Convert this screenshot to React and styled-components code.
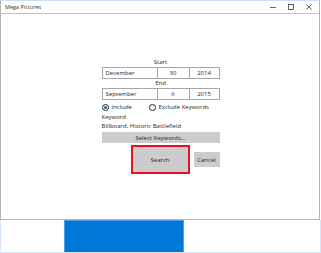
import React from 'react';
import styled, { createGlobalStyle } from 'styled-components';

const Global = createGlobalStyle`
  html, body {
    margin: 0;
    padding: 0;
    background: #fff;
  }
  body {
    font-family: "Open Sans", "Noto Sans", sans-serif;
    color: #1e1e1e;
  }
`

const Page = styled.div`
  width: 321px;
  height: 253px;
  display: flex;
  flex-direction: column;
  overflow: hidden;
`

const Window = styled.div`
  width: 320px;
  height: 220px;
  box-sizing: border-box;
  border: 1px solid #b4b4b4;
  border-top: 1px solid #cfdff3;
  display: flex;
  flex-direction: column;
  background: #fff;
`

const TitleBar = styled.div`
  height: 12px;
  display: flex;
  align-items: center;
  padding-left: 4px;
  padding-right: 1px;
  border-bottom: 1px solid #c4c4c4;
  font-size: 5.5px;
  color: #333;
`

const Title = styled.span`
  flex: 1;
`

const Controls = styled.div`
  display: flex;
  height: 100%;
`

const Ctl = styled.div`
  width: 18px;
  display: flex;
  align-items: center;
  justify-content: center;
`

const Content = styled.div`
  flex: 1;
  display: flex;
  justify-content: center;
  padding-top: 44px;
`

const Form = styled.div`
  width: 118px;
  margin-left: 1px;
  display: flex;
  flex-direction: column;
  font-size: 6px;
`

const Label = styled.div`
  height: ${p => p.$h || 8}px;
  line-height: 8px;
  text-align: ${p => (p.$center ? 'center' : 'left')};
  white-space: nowrap;
`

const DateRow = styled.div`
  display: grid;
  grid-template-columns: 54px 32px 1fr;
  box-sizing: border-box;
  height: 12px;
  margin-top: 1px;
  border: 1px solid #a6a6a6;
`

const Cell = styled.div`
  display: flex;
  align-items: center;
  justify-content: ${p => (p.$left ? 'flex-start' : 'center')};
  padding-left: ${p => (p.$left ? 3 : 0)}px;
  border-left: ${p => (p.$left ? 'none' : '1px solid #a6a6a6')};
`

const RadioRow = styled.div`
  display: flex;
  align-items: center;
  height: 10px;
  margin-top: 2px;
  margin-bottom: 1px;
`

const Radio = styled.label`
  display: flex;
  align-items: center;
  gap: 3px;
  width: ${p => p.$w || 'auto'};
`

const Circle = styled.span`
  width: 7px;
  height: 7px;
  box-sizing: border-box;
  border-radius: 50%;
  border: 1px solid #222;
  display: flex;
  align-items: center;
  justify-content: center;
  &::after {
    content: '';
    width: 3px;
    height: 3px;
    border-radius: 50%;
    background: ${p => (p.$on ? '#0063b1' : 'transparent')};
  }
`

const WideButton = styled.div`
  height: 11px;
  background: #cccccc;
  display: flex;
  align-items: center;
  justify-content: center;
  margin-top: 2px;
`

const ButtonRow = styled.div`
  display: flex;
  justify-content: flex-end;
  align-items: center;
  gap: 4px;
  margin-top: 2px;
`

const Button = styled.div`
  box-sizing: border-box;
  width: ${p => p.$w}px;
  height: ${p => p.$h}px;
  background: #cccccc;
  border: ${p => (p.$focus ? '2px solid #e81123' : 'none')};
  display: flex;
  align-items: center;
  justify-content: center;
`

const Lower = styled.div`
  flex: 1;
  width: 321px;
  box-sizing: border-box;
  border: 1px solid #d6e5f7;
  border-top: none;
  display: flex;
  padding-left: 63px;
`

const Tile = styled.div`
  width: 120px;
  background: #0078d7;
  border: 1px solid #4f9fe6;
  border-bottom: none;
  box-sizing: border-box;
`

const Minimize = () => (
  <svg width="6" height="6" viewBox="0 0 6 6">
    <path d="M0 3.5h6" stroke="#222" strokeWidth="0.7" />
  </svg>
)

const Maximize = () => (
  <svg width="6" height="6" viewBox="0 0 6 6">
    <rect x="0.5" y="0.5" width="5" height="5" fill="none" stroke="#222" strokeWidth="0.7" />
  </svg>
)

const Close = () => (
  <svg width="6" height="6" viewBox="0 0 6 6">
    <path d="M0.3 0.3L5.7 5.7M5.7 0.3L0.3 5.7" stroke="#222" strokeWidth="0.7" />
  </svg>
)

const dates = [
  { label: 'Start', month: 'December', day: '30', year: '2014' },
  { label: 'End', month: 'September', day: '6', year: '2015' },
]

export default function App() {
  return (
    <Page>
      <Global />
      <Window>
        <TitleBar>
          <Title>Mega Pictures</Title>
          <Controls>
            <Ctl><Minimize /></Ctl>
            <Ctl><Maximize /></Ctl>
            <Ctl><Close /></Ctl>
          </Controls>
        </TitleBar>
        <Content>
          <Form>
            {dates.map(d => (
              <React.Fragment key={d.label}>
                <Label $center>{d.label}</Label>
                <DateRow>
                  <Cell $left>{d.month}</Cell>
                  <Cell>{d.day}</Cell>
                  <Cell>{d.year}</Cell>
                </DateRow>
              </React.Fragment>
            ))}
            <RadioRow>
              <Radio $w="47px"><Circle $on />Include</Radio>
              <Radio><Circle />Exclude Keywords</Radio>
            </RadioRow>
            <Label $h={9}>Keyword</Label>
            <Label>Billboard, Historic Battlefield</Label>
            <WideButton>Select Keywords...</WideButton>
            <ButtonRow>
              <Button $w={59} $h={29} $focus>Search</Button>
              <Button $w={26} $h={15}>Cancel</Button>
            </ButtonRow>
          </Form>
        </Content>
      </Window>
      <Lower>
        <Tile />
      </Lower>
    </Page>
  )
}
